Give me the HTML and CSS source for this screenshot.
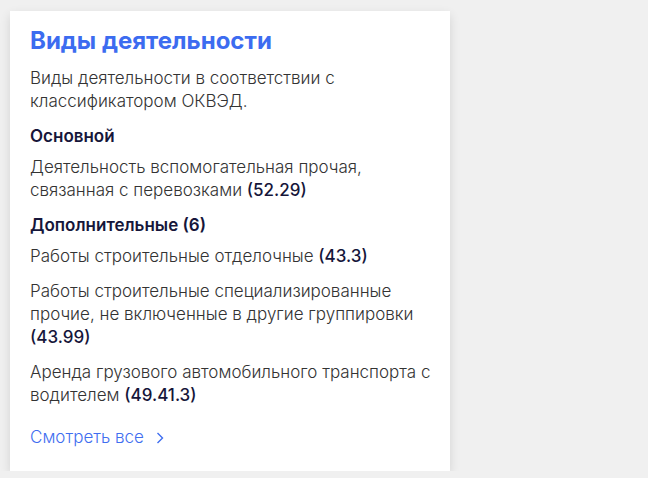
FILE: index.html
```html
<!DOCTYPE html>
<html lang="ru">

<head>
    <meta charset="UTF-8" />
    <meta name="viewport" content="width=device-width, initial-scale=1.0" />
    <title>Виды деятельности</title>
    <link rel="stylesheet" href="styles.css">
</head>

<body>
    <div class="card">
        <h2 class="card_title">Виды деятельности</h2>
        <p class="card_lead">Виды деятельности в соответствии с классификатором ОКВЭД.</p>

        <h3 class="group_title">Основной</h3>
        <p class="item">Деятельность вспомогательная прочая, связанная с перевозками <b>(52.29)</b></p>

        <h3 class="group_title">Дополнительные (6)</h3>
        <p class="item">Работы строительные отделочные <b>(43.3)</b></p>
        <p class="item">Работы строительные специализированные прочие, не включенные в другие группировки <b>(43.99)</b></p>
        <p class="item">Аренда грузового автомобильного транспорта с водителем <b>(49.41.3)</b></p>

        <a class="more" href="#">Смотреть все
            <svg width="8" height="12" viewBox="0 0 8 12">
                <path d="M1.5 1 L6.5 6 L1.5 11" fill="none" stroke="#3f6ef0" stroke-width="1.4" />
            </svg>
        </a>
    </div>
</body>

</html>
```
FILE: styles.css
```css
body {
    margin: 0;
    background: #f0f0f0;
    font-family: "Inter", "Noto Sans", sans-serif;
    color: #333;
}

.card {
    width: 402px;
    margin: 11px 0 0 10px;
    padding: 16px 18px 22px 20px;
    background: #fff;
    box-shadow: 0 4px 10px rgba(0, 0, 0, 0.12);
}

.card_title {
    margin: 0 0 12px;
    font-size: 24px;
    line-height: 28px;
    font-weight: 700;
    color: #3c6cf0;
}

.card_lead {
    margin: 0 0 12px;
    font-size: 17px;
    line-height: 23px;
    font-weight: 300;
}

.group_title {
    margin: 0 0 8px;
    font-size: 17px;
    line-height: 23px;
    font-weight: 600;
    color: #16163a;
}

.item {
    margin: 0 0 12px;
    font-size: 17px;
    line-height: 23px;
    font-weight: 300;
}

.item b {
    font-weight: 500;
    color: #16163a;
}

.more {
    display: inline-flex;
    align-items: center;
    gap: 12px;
    margin-top: 7px;
    font-size: 17px;
    line-height: 23px;
    font-weight: 300;
    color: #3f6ef0;
    text-decoration: none;
}
```
